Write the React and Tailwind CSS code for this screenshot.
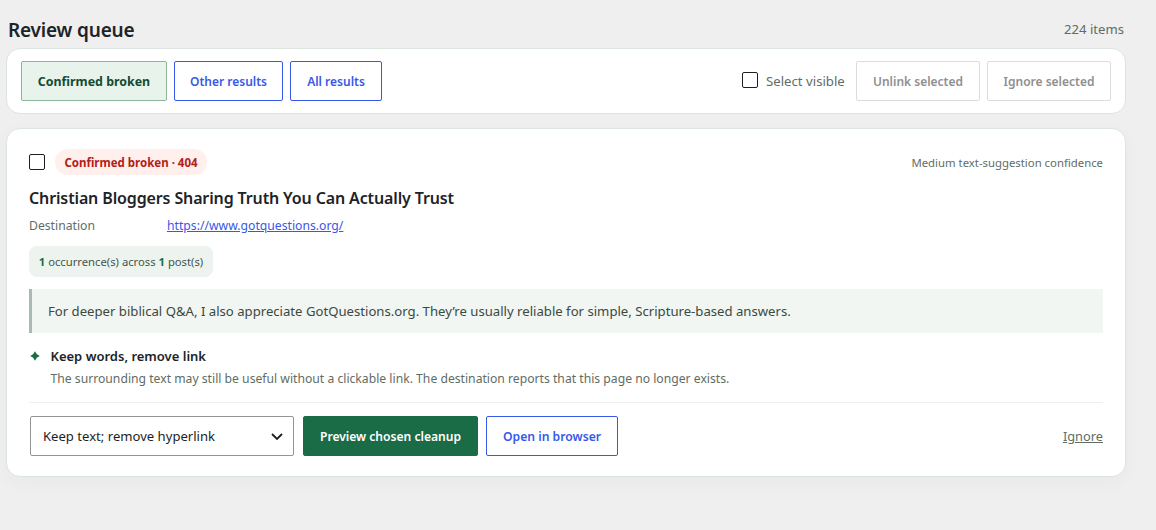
import { useState } from 'react'
import clsx from 'clsx'

const FILTERS = [
  { id: 'broken', label: 'Confirmed broken', width: 'w-[146px]' },
  { id: 'other', label: 'Other results', width: 'w-[109px]' },
  { id: 'all', label: 'All results', width: 'w-[92px]' },
]

function Button({ className, children, ...props }) {
  return (
    <button
      className={clsx('h-10 shrink-0 rounded-[2px] border pt-0.5 whitespace-nowrap', className)}
      {...props}
    >
      {children}
    </button>
  )
}

function Checkbox({ checked, onChange }) {
  return (
    <input
      type="checkbox"
      checked={checked}
      onChange={onChange}
      className="block size-4 shrink-0 appearance-none rounded-[2px] border border-[#1e1e1e] bg-white checked:bg-[#196c46]"
    />
  )
}

function Toolbar({ selected, onSelect }) {
  const [filter, setFilter] = useState('broken')

  return (
    <div className="flex h-[66px] items-center justify-between rounded-[14px] border border-[#dce5df] bg-white px-3.5">
      <div className="flex gap-[7px]">
        {FILTERS.map((f) => (
          <Button
            key={f.id}
            onClick={() => setFilter(f.id)}
            className={clsx(
              f.width,
              filter === f.id
                ? 'border-[#8ab79c] bg-[#e8f3eb] text-[12.4px] font-bold text-[#124b31]'
                : 'border-[#3858e9] bg-white text-[12px] font-semibold text-[#3858e9]'
            )}
          >
            {f.label}
          </Button>
        ))}
      </div>
      <div className="flex items-center">
        <label className="mr-[11px] flex items-center gap-2 text-[13.2px] text-[#5f6d65]">
          <span className="-mt-0.5"><Checkbox checked={selected} onChange={onSelect} /></span>
          <span className="w-[79px] pt-px whitespace-nowrap">Select visible</span>
        </label>
        <div className="flex gap-[7px]">
          <Button disabled className="w-[124px] border-[#dcdcde] bg-white text-[12px] font-semibold text-[#8f8f8f]">Unlink selected</Button>
          <Button disabled className="w-[124px] border-[#dcdcde] bg-white text-[12px] font-semibold text-[#8f8f8f]">Ignore selected</Button>
        </div>
      </div>
    </div>
  )
}

function ReviewCard({ selected, onSelect }) {
  return (
    <article className="mt-3.5 h-[349px] rounded-[14px] border border-[#dce5df] bg-white px-[22px] pt-5 shadow-[0_5px_18px_rgba(20,50,35,0.035)]">
      <div className="flex h-[26px] items-center justify-between">
        <div className="flex items-center gap-2.5">
          <Checkbox checked={selected} onChange={onSelect} />
          <span className="flex h-[26px] w-[152px] items-center justify-center rounded-full bg-[#ffefed] pt-px text-[11.5px] font-bold whitespace-nowrap text-[#b32018]">
            Confirmed broken · 404
          </span>
        </div>
        <span className="pt-px text-[11.35px] text-[#5f6d65]">Medium text-suggestion confidence</span>
      </div>

      <h3 className="mt-[11px] text-[16px] leading-6 font-semibold tracking-[-0.13px] text-[#1d2327]">
        Christian Bloggers Sharing Truth You Can Actually Trust
      </h3>
      <div className="mt-1.5 grid h-5 grid-cols-[138px_1fr] text-[12.2px] leading-5">
        <span className="text-[#5f6d65]">Destination</span>
        <a href="https://www.gotquestions.org/" className="text-[#3858e9] underline">
          https://www.gotquestions.org/
        </a>
      </div>

      <div className="mt-2.5 flex h-[31px] w-[184px] items-center justify-center rounded-lg bg-[#edf4f0] pt-px text-[11.25px] whitespace-pre text-[#44544b]">
        <b className="text-[#196c46]">1</b> occurrence(s) across <b className="text-[#196c46]">1</b> post(s)
      </div>

      <blockquote className="mt-3 flex h-11 items-center border-l-3 border-[#a8bbb0] bg-[#f1f6f2] pt-0.5 pl-4 text-[13.15px] text-[#3c4941]">
        For deeper biblical Q&amp;A, I also appreciate GotQuestions.org. They’re usually reliable for simple, Scripture-based answers.
      </blockquote>

      <div className="mt-3 flex h-[45px]">
        <svg viewBox="0 0 10 10" className="mt-1.5 mr-2.5 ml-px size-2.5 shrink-0 fill-[#196c46]">
          <path d="M5 0.3 Q6.2 3.8 9.7 5 Q6.2 6.2 5 9.7 Q3.8 6.2 0.3 5 Q3.8 3.8 5 0.3Z" />
        </svg>
        <div className="pl-[0.5px]">
          <p className="text-[13px] leading-[22px] font-semibold text-[#1d2327]">Keep words, remove link</p>
          <p className="pt-px text-[12.18px] leading-[22px] text-[#5f6d65]">
            The surrounding text may still be useful without a clickable link. The destination reports that this page no longer exists.
          </p>
        </div>
      </div>

      <div className="mt-3 flex items-center border-t border-[#edf0ee] pt-[13px] pl-px">
        <button className="mr-[9px] flex h-10 w-[264px] items-center justify-between rounded-[2px] border border-[#949494] bg-white pr-2.5 pl-3 text-[13.1px] text-[#1e1e1e]">
          <span className="pt-0.5">Keep text; remove hyperlink</span>
          <svg viewBox="0 0 12 8" className="mt-px h-2 w-3 fill-none stroke-[#1e1e1e] stroke-[1.8]">
            <path d="M1 1 L6 6 L11 1" />
          </svg>
        </button>
        <Button className="mr-2 w-[175px] border-[#196c46] bg-[#196c46] text-[12.1px] font-semibold text-white">Preview chosen cleanup</Button>
        <Button className="w-[132px] border-[#3858e9] bg-white text-[12.2px] font-semibold text-[#3858e9]">Open in browser</Button>
        <button className="ml-auto pt-0.5 text-[12.8px] text-[#5f6d65] underline">Ignore</button>
      </div>
    </article>
  )
}

export default function App() {
  const [selected, setSelected] = useState(false)
  const toggle = () => setSelected(!selected)

  return (
    <main className="h-[530px] overflow-hidden bg-[#efefef] pr-[30px] pl-1.5 font-['Noto_Sans',sans-serif]">
      <header className="flex h-12 items-center justify-between px-0.5 pt-3">
        <h2 className="text-[19px] font-semibold tracking-[-0.17px] text-[#1d2327]">Review queue</h2>
        <span className="text-[13.1px] text-[#5f6d65]">224 items</span>
      </header>
      <Toolbar selected={selected} onSelect={toggle} />
      <ReviewCard selected={selected} onSelect={toggle} />
    </main>
  )
}
